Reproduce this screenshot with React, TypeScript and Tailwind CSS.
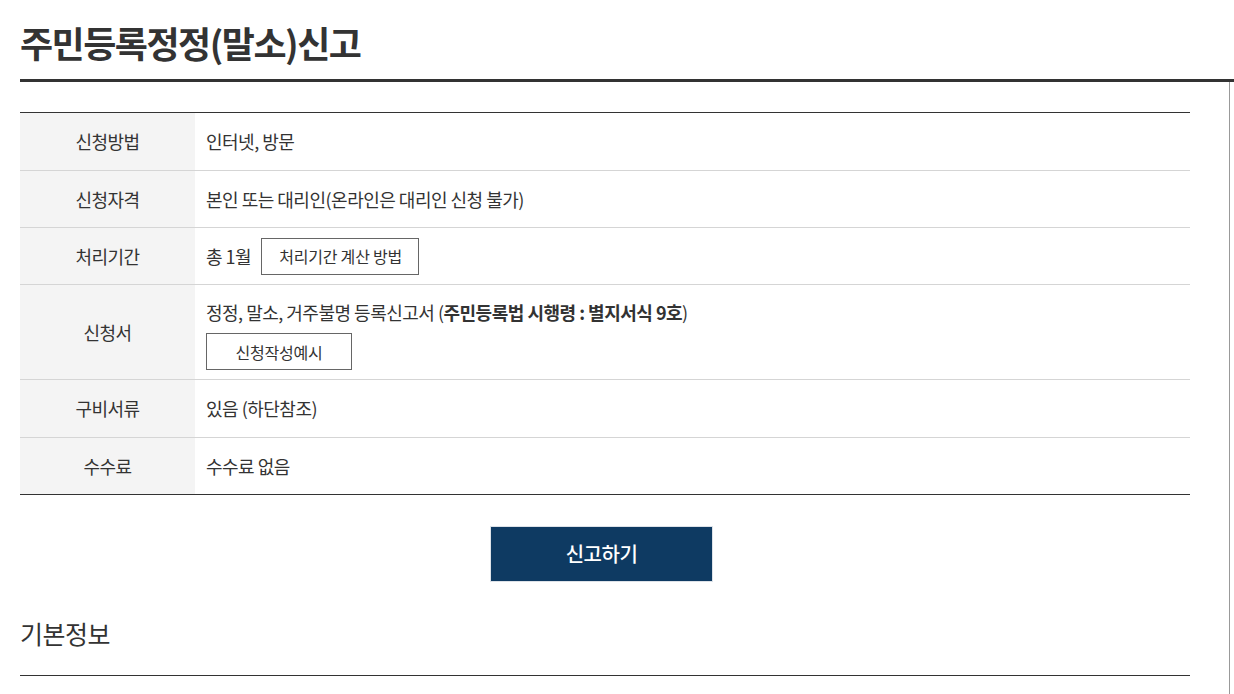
import React from "react";

const font = {
  fontFamily: '"Noto Sans CJK KR", "Noto Sans", sans-serif',
};

function Row({
  label,
  children,
  tall,
  last,
  h = "h-[56px]",
}: {
  label: string;
  children: React.ReactNode;
  tall?: boolean;
  last?: boolean;
  h?: string;
}) {
  return (
    <div
      className={`flex ${last ? "border-b border-[#333]" : "border-b border-[#d5d5d5]"}`}
    >
      <div className="w-[175px] shrink-0 bg-[#f4f4f4] flex items-center justify-center text-[18px] text-[#333] tracking-[-0.5px]">
        {label}
      </div>
      <div
        className={`flex-1 pl-[11px] text-[18px] text-[#333] tracking-[-0.5px] ${
          tall ? "pt-[13px] pb-[9px]" : `${h} flex items-center`
        }`}
      >
        {children}
      </div>
    </div>
  );
}

export default function App() {
  return (
    <div
      className="w-[1234px] h-[694px] overflow-hidden bg-white text-[#333]"
      style={font}
    >
      <div className="pl-5">
        <h1 className="pt-[17px] pb-[12px] leading-[50px] text-[36px] font-bold tracking-[-1.5px] text-[#333] border-b-[3px] border-[#333]">
          주민등록정정(말소)신고
        </h1>
      </div>
      <div className="flex h-[620px]">
        <main className="ml-5 w-[1170px] shrink-0 pt-[30px]">
          <div className="border-t border-[#333]">
            <Row label="신청방법" h="h-[57px]">
              인터넷, 방문
            </Row>
            <Row label="신청자격">본인 또는 대리인(온라인은 대리인 신청 불가)</Row>
            <Row label="처리기간">
              <span>총 1월</span>
              <span className="ml-[10px] h-[37px] pl-[17px] pr-[16px] border border-[#666] flex items-center text-[16px] tracking-[-0.2px] text-[#333]">
                처리기간 계산 방법
              </span>
            </Row>
            <Row label="신청서" tall>
              <div className="leading-[28px]">
                정정, 말소, 거주불명 등록신고서 (
                <b className="font-bold">주민등록법 시행령 : 별지서식 9호</b>)
              </div>
              <div className="mt-[7px] w-[146px] h-[37px] border border-[#666] flex items-center justify-center text-[16px] tracking-[-0.2px]">
                신청작성예시
              </div>
            </Row>
            <Row label="구비서류" h="h-[57px]">
              있음 (하단참조)
            </Row>
            <Row label="수수료" last>
              수수료 없음
            </Row>
          </div>
          <div className="flex justify-center pr-[7px] mt-[31px]">
            <button className="w-[223px] h-[56px] bg-[#0e3a62] border border-[#dde2e8] text-white text-[20px] font-medium tracking-[-0.5px]">
              신고하기
            </button>
          </div>
          <h2 className="mt-[33px] text-[25px] leading-[36px] font-normal tracking-[-0.5px] text-[#333] pb-[24px] border-b border-[#333]">
            기본정보
          </h2>
        </main>
        <aside className="ml-[39px] w-full border-l border-[#999]" />
      </div>
    </div>
  );
}
